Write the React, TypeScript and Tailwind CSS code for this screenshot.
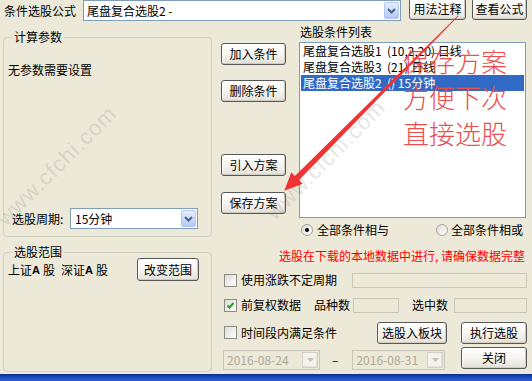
import React from "react";

function Btn({ children, className = "" }: { children: React.ReactNode; className?: string }) {
  return (
    <div
      className={`flex items-center justify-center border border-[#585858] rounded-[3px] bg-linear-to-b from-white via-[#f6f5f1] to-[#e2e0d8] shadow-[inset_-1px_-1px_0_#cfcdc2,inset_1px_1px_0_#ffffff] text-[12px] leading-[14px] text-black shrink-0 ${className}`}
    >
      {children}
    </div>
  );
}

function DropBtn() {
  return (
    <div className="w-[15px] h-[17px] rounded-[2px] border border-[#b3c6f0] bg-linear-to-b from-[#e6eefe] to-[#b4c9f7] flex items-center justify-center shrink-0">
      <svg width="9" height="6" viewBox="0 0 9 6">
        <path d="M1 1 L4.5 4.5 L8 1" stroke="#4d6185" strokeWidth="2" fill="none" />
      </svg>
    </div>
  );
}

function DisDropBtn() {
  return (
    <div className="w-[16px] h-[16px] border border-[#d4d2c6] bg-[#f3f2ec] flex items-center justify-center shrink-0 shadow-[inset_-1px_-1px_0_#e2e0d6]">
      <svg width="7" height="4" viewBox="0 0 7 4">
        <path d="M0 0 L7 0 L3.5 4 Z" fill="#c3c1b5" />
      </svg>
    </div>
  );
}

function CheckBox({ checked = false }: { checked?: boolean }) {
  return (
    <div className="w-[13px] h-[13px] border border-[#8c8c86] bg-linear-to-br from-[#dcdcd6] to-white flex items-center justify-center shrink-0">
      {checked && (
        <svg width="9" height="9" viewBox="0 0 9 9">
          <path d="M1.5 4.5 L3.5 6.5 L7.5 2" stroke="#21a121" strokeWidth="2" fill="none" />
        </svg>
      )}
    </div>
  );
}

function Radio({ checked = false }: { checked?: boolean }) {
  return (
    <div className="w-[12px] h-[12px] rounded-full border border-[#a4a49c] bg-linear-to-br from-[#dcdcd6] to-white flex items-center justify-center shrink-0">
      {checked && <div className="w-[4px] h-[4px] rounded-full bg-black" />}
    </div>
  );
}

function Field({ className = "" }: { className?: string }) {
  return <div className={`h-[15px] border border-[#c9c7ba] bg-[#ece9d8] shrink-0 ${className}`} />;
}

function GroupBox({
  title,
  className = "",
  children,
}: {
  title: string;
  className?: string;
  children: React.ReactNode;
}) {
  return (
    <div className={`w-[209px] border border-[#d0d0bf] rounded-[4px] flex flex-col ${className}`}>
      <div className="-mt-[8px] ml-[8px] px-[2px] self-start bg-[#ece9d8] text-[12px] leading-[14px] text-black">
        {title}
      </div>
      {children}
    </div>
  );
}

export default function App() {
  return (
    <div className="relative w-[532px] h-[381px] overflow-hidden bg-[#ece9d8] flex flex-col font-['Noto_Sans_CJK_SC',sans-serif] text-[12px] leading-[14px] text-black">
      {/* Top bar */}
      <div className="h-[21px] flex items-center shrink-0">
        <div className="w-[83px] pl-[4px]">条件选股公式</div>
        <div className="w-[318px] h-[21px] border border-[#7f9db9] bg-white flex items-center">
          <span className="pl-[3px] flex-1 whitespace-pre">尾盘复合选股2 -</span>
          <div className="mr-[1px]">
            <DropBtn />
          </div>
        </div>
        <Btn className="ml-[8px] w-[57px] h-[22px] -mt-[3px]">用法注释</Btn>
        <Btn className="ml-[6px] w-[55px] h-[22px] -mt-[3px]">查看公式</Btn>
      </div>

      {/* Body */}
      <div className="flex flex-1">
        {/* Left column */}
        <div className="w-[212px] pl-[3px] flex flex-col">
          <GroupBox title="计算参数" className="mt-[16px] h-[200px]">
            <div className="mt-[19px] ml-[4px]">无参数需要设置</div>
            <div className="mt-auto mb-[7px] flex items-center">
              <span className="ml-[8px] w-[58px]">选股周期:</span>
              <div className="w-[128px] h-[21px] border border-[#7f9db9] bg-white flex items-center">
                <span className="pl-[4px] flex-1">15分钟</span>
                <div className="mr-[1px]">
                  <DropBtn />
                </div>
              </div>
            </div>
          </GroupBox>
          <GroupBox title="选股范围" className="mt-[15px] h-[120px]">
            <div className="-mt-[1px] flex items-center">
              <span className="ml-[4px] w-[129px] flex items-center">
                上证<span className="font-['Liberation_Sans',sans-serif] font-bold text-[11px] mr-[3px]">A</span>股
                <span className="ml-[6px]">深证</span>
                <span className="font-['Liberation_Sans',sans-serif] font-bold text-[11px] mr-[3px]">A</span>股
              </span>
              <Btn className="w-[62px] h-[23px]">改变范围</Btn>
            </div>
          </GroupBox>
        </div>

        {/* Right column */}
        <div className="w-[320px] flex flex-col">
          <div className="flex h-[197px]">
            <div className="ml-[9px] w-[65px] flex flex-col">
              <Btn className="mt-[22px] w-[65px] h-[22px]">加入条件</Btn>
              <Btn className="mt-[15px] w-[65px] h-[22px]">删除条件</Btn>
              <Btn className="mt-[52px] w-[65px] h-[22px]">引入方案</Btn>
              <Btn className="mt-[16px] w-[65px] h-[22px]">保存方案</Btn>
            </div>
            <div className="ml-[13px] w-[227px] flex flex-col">
              <div className="h-[21px] flex items-center pl-[1px]">选股条件列表</div>
              <div className="h-[176px] border border-[#7f9db9] bg-white px-[1px] flex flex-col">
                <div className="h-[16px] flex items-center pl-[2px] whitespace-pre">尾盘复合选股1  (10,2,20) 日线</div>
                <div className="h-[16px] flex items-center pl-[2px] whitespace-pre">尾盘复合选股3  (21) 日线</div>
                <div className="h-[16px] flex items-center pl-[2px] whitespace-pre bg-[#316ac5] text-white">尾盘复合选股2  () 15分钟</div>
              </div>
            </div>
          </div>

          {/* radios */}
          <div className="h-[24px] flex items-center">
            <div className="ml-[89px]">
              <Radio checked />
            </div>
            <span className="ml-[4px]">全部条件相与</span>
            <div className="ml-[47px]">
              <Radio />
            </div>
            <span className="ml-[3px]">全部条件相或</span>
          </div>

          {/* warning */}
          <div className="mt-[6px] h-[16px] flex items-center pl-[67px] text-[#ff0000] whitespace-pre">
            选股在下载的本地数据中进行, 请确保数据完整
          </div>

          {/* row 1 */}
          <div className="mt-[8px] h-[16px] flex items-center">
            <div className="ml-[12px]">
              <CheckBox />
            </div>
            <span className="ml-[4px]">使用涨跌不定周期</span>
            <Field className="ml-auto mr-[5px] w-[175px]" />
          </div>

          {/* row 2 */}
          <div className="mt-[9px] h-[16px] flex items-center">
            <div className="ml-[12px]">
              <CheckBox checked />
            </div>
            <span className="ml-[4px] w-[73px]">前复权数据</span>
            <span>品种数</span>
            <Field className="ml-[3px] w-[46px]" />
            <span className="ml-[13px]">选中数</span>
            <Field className="ml-[6px] w-[73px]" />
          </div>

          {/* row 3 */}
          <div className="mt-[9px] h-[21px] flex items-center">
            <div className="ml-[12px]">
              <CheckBox />
            </div>
            <span className="ml-[4px]">时间段内满足条件</span>
            <Btn className="ml-auto w-[70px] h-[22px]">选股入板块</Btn>
            <Btn className="ml-[14px] mr-[5px] w-[66px] h-[22px]">执行选股</Btn>
          </div>

          {/* row 4 */}
          <div className="mt-[4px] flex items-start">
            <div className="ml-[11px] mt-[3px] w-[97px] h-[20px] border border-[#c9c7ba] flex items-center">
              <span className="pl-[3px] flex-1 text-[#aca899]">2016-08-24</span>
              <div className="mr-[1px]">
                <DisDropBtn />
              </div>
            </div>
            <span className="ml-[12px] mt-[6px]">–</span>
            <div className="ml-[14px] mt-[3px] w-[93px] h-[20px] border border-[#c9c7ba] flex items-center">
              <span className="pl-[3px] flex-1 text-[#aca899]">2016-08-31</span>
              <div className="mr-[1px]">
                <DisDropBtn />
              </div>
            </div>
            <Btn className="ml-auto mr-[5px] w-[66px] h-[22px]">关闭</Btn>
          </div>
        </div>
      </div>

      {/* window bottom frame */}
      <div className="h-[7px] shrink-0 bg-linear-to-b from-[#0b2c8f] via-[#1d4cc0] to-[#2d5fd3]" />

      {/* watermarks */}
      <span className="absolute left-[57px] top-[166px] -translate-x-1/2 -translate-y-1/2 -rotate-45 font-['Liberation_Sans',sans-serif] text-[22px] leading-[24px] tracking-[1px] text-[rgba(120,120,120,0.2)] whitespace-nowrap pointer-events-none">
        www.cfchi.com
      </span>
      <span className="absolute left-[326px] top-[160px] -translate-x-1/2 -translate-y-1/2 -rotate-45 font-['Liberation_Sans',sans-serif] text-[22px] leading-[24px] tracking-[1px] text-[rgba(120,120,120,0.2)] whitespace-nowrap pointer-events-none">
        www.cfchi.com
      </span>

      {/* red annotation arrow */}
      <svg className="absolute left-0 top-0 pointer-events-none" width="532" height="381" viewBox="0 0 532 381">
        <polygon
          points="458.35,16.35 299.1,180.1 302.7,183.7 284.3,190.7 291.3,172.3 294.9,175.9 457.65,15.65"
          fill="#f03434"
        />
      </svg>

      {/* red annotation text */}
      <div className="absolute left-[403px] top-[43px] flex flex-col text-[26px] leading-[36px] font-extralight text-[#ec4c4c] pointer-events-none">
        <span>保存方案</span>
        <span>方便下次</span>
        <span>直接选股</span>
      </div>
    </div>
  );
}
